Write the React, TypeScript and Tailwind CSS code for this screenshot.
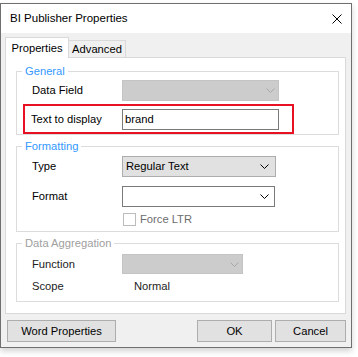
import React from 'react';

const Chevron = ({ color = '#000' }: { color?: string }) => (
  <svg width="9" height="5" viewBox="0 0 9 5" fill="none">
    <polyline points="0.5,0.5 4.5,4.5 8.5,0.5" stroke={color} strokeWidth="1" />
  </svg>
);

export default function App() {
  return (
    <div className="w-[358px] h-[357px] bg-white overflow-hidden font-['Liberation_Sans',Arial,sans-serif] text-[11.2px] text-black">
      {/* Dialog */}
      <div className="mt-[3px] w-[352px] h-[345px] border border-[#6f6f6f] flex flex-col shadow-[0_3px_6px_rgba(0,0,0,0.18)]">
        {/* Title bar */}
        <div className="h-[29px] bg-white flex items-center justify-between pl-[9px] pr-[9px]">
          <span className="text-[11.5px] leading-none">BI Publisher Properties</span>
          <svg width="10" height="10" viewBox="0 0 10 10">
            <path d="M0.5 0.5 L9.5 9.5 M9.5 0.5 L0.5 9.5" stroke="#000" strokeWidth="1" />
          </svg>
        </div>

        {/* Body */}
        <div className="flex-1 bg-[#f0f0f0] flex flex-col pl-[4px] pr-[5px] pt-[4px]">
          {/* Tabs */}
          <div className="flex items-end h-[21px] -mb-px relative z-10">
            <div className="w-[64px] h-[21px] bg-white border border-b-0 border-[#d9d9d9] flex items-center justify-center relative z-10">
              Properties
            </div>
            <div className="-ml-px w-[58px] h-[18px] bg-[#f0f0f0] border border-[#d9d9d9] flex items-center justify-center">
              Advanced
            </div>
          </div>

          {/* Panel */}
          <div className="h-[257px] bg-white border border-[#d9d9d9] pl-[10px] pr-[6px] pt-[6px]">
            {/* General */}
            <fieldset className="border border-[#dcdcdc]">
              <legend className="ml-[5px] px-[3px] leading-[14px] text-[#3399ff]">General</legend>
              <div className="flex items-center mt-[2px] h-[21px] pl-[15px]">
                <span className="w-[90px]">Data Field</span>
                <div className="w-[157px] h-[21px] bg-[#cccccc] border border-[#c4c4c4] flex items-center justify-end pr-[3px]">
                  <Chevron color="#a8a8a8" />
                </div>
              </div>
              <div className="mt-[3px] ml-[6px] w-[271px] h-[30px] border-2 border-[#e81123] flex items-center pl-[6px]">
                <span className="w-[91px]">Text to display</span>
                <div className="w-[157px] h-[21px] bg-white border border-[#7a7a7a] flex items-center pl-[2px]">
                  brand
                </div>
              </div>
            </fieldset>

            {/* Formatting */}
            <fieldset className="mt-[4px] border border-[#dcdcdc] pb-[5px]">
              <legend className="ml-[5px] px-[3px] leading-[14px] text-[#3399ff]">Formatting</legend>
              <div className="flex items-center mt-[3px] h-[21px] pl-[15px]">
                <span className="w-[90px]">Type</span>
                <div className="w-[154px] h-[21px] bg-[#e1e1e1] border border-[#adadad] flex items-center justify-between pl-[3px] pr-[6px]">
                  <span>Regular Text</span>
                  <Chevron />
                </div>
              </div>
              <div className="flex items-center mt-[9px] h-[21px] pl-[15px]">
                <span className="w-[90px]">Format</span>
                <div className="w-[153px] h-[21px] bg-white border border-[#7a7a7a] flex items-center justify-end pr-[5px]">
                  <Chevron />
                </div>
              </div>
              <div className="flex items-center mt-[6px] h-[13px] pl-[106px]">
                <div className="w-[13px] h-[13px] border border-[#bcbcbc] bg-white" />
                <span className="ml-[4px] text-[#6d6d6d]">Force LTR</span>
              </div>
            </fieldset>

            {/* Data Aggregation */}
            <fieldset className="mt-[4px] border border-[#dcdcdc] pb-[7px]">
              <legend className="ml-[5px] px-[3px] leading-[14px] text-[#a0a0a0]">Data Aggregation</legend>
              <div className="flex items-center mt-[4px] h-[20px] pl-[15px]">
                <span className="w-[90px] text-[#222]">Function</span>
                <div className="w-[121px] h-[20px] bg-[#cccccc] border border-[#c4c4c4] flex items-center justify-end pr-[3px]">
                  <Chevron color="#a8a8a8" />
                </div>
              </div>
              <div className="flex items-center mt-[4px] h-[16px] pl-[15px]">
                <span className="w-[102px] text-[#222]">Scope</span>
                <span className="text-[#222]">Normal</span>
              </div>
            </fieldset>
          </div>

          {/* Buttons */}
          <div className="flex items-center mt-[6px] h-[22px] pl-[2px]">
            <button className="w-[109px] h-[22px] bg-[#e1e1e1] border border-[#adadad]">Word Properties</button>
            <div className="flex-1" />
            <button className="w-[75px] h-[22px] bg-[#e1e1e1] border border-[#adadad]">OK</button>
            <button className="ml-[3px] w-[71px] h-[22px] bg-[#e1e1e1] border border-[#adadad]">Cancel</button>
          </div>
        </div>
      </div>
    </div>
  );
}
